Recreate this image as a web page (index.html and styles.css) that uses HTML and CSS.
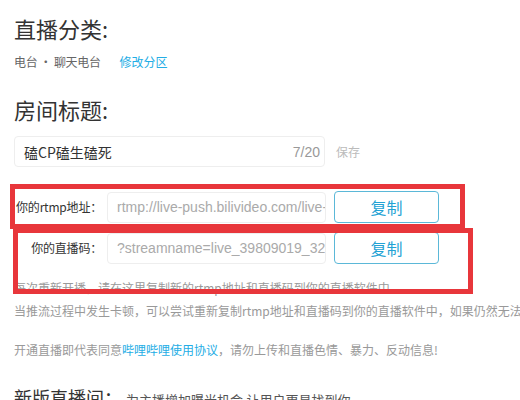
FILE: index.html
```html
<!DOCTYPE html>
<html lang="zh-CN">
<head>
    <meta charset="UTF-8">
    <title>直播间设置</title>
    <link rel="stylesheet" href="styles.css">
</head>
<body>
    <div class="page">
        <h2 class="section-title">直播分类:</h2>
        <div class="category">
            <span class="category-name">电台 · 聊天电台</span>
            <a class="link">修改分区</a>
        </div>

        <h2 class="section-title room">房间标题:</h2>
        <div class="title-row">
            <div class="title-input">
                <span class="title-text">磕CP磕生磕死</span>
                <span class="counter">7/20</span>
            </div>
            <span class="save">保存</span>
        </div>

        <div class="stream-row first">
            <span class="label">你的rtmp地址：</span>
            <div class="field">rtmp://live-push.bilivideo.com/live-bvc/</div>
            <button class="copy">复制</button>
        </div>
        <div class="stream-row">
            <span class="label">你的直播码：</span>
            <div class="field">?streamname=live_39809019_3264150&amp;key=</div>
            <button class="copy">复制</button>
        </div>

        <div class="help">
            <p>每次重新开播，请在这里复制新的rtmp地址和直播码到你的直播软件中</p>
            <p>当推流过程中发生卡顿，可以尝试重新复制rtmp地址和直播码到你的直播软件中，如果仍然无法解决请联系客服</p>
        </div>
        <p class="agree">开通直播即代表同意<a class="link">哔哩哔哩使用协议</a>，请勿上传和直播色情、暴力、反动信息!</p>

        <div class="new-room">
            <h2 class="section-title">新版直播间：</h2>
            <span class="new-desc">为主播增加曝光机会,让用户更易找到你</span>
        </div>

        <div class="mark mark-rtmp"></div>
        <div class="mark mark-code"></div>
    </div>
</body>
</html>
```

FILE: styles.css
```css
* {
    margin: 0;
    padding: 0;
    box-sizing: border-box;
}

body {
    background: #fff;
    font-family: "Noto Sans CJK SC", "Noto Sans", sans-serif;
    color: #333;
    overflow: hidden;
}

.page {
    position: relative;
    padding: 13px 14px 0;
}

.section-title {
    font-size: 22px;
    font-weight: normal;
    line-height: 30px;
    color: #333;
}

.section-title.room {
    margin-top: 23px;
}

.category {
    margin-top: 10px;
    font-size: 12px;
    line-height: 18px;
    white-space: nowrap;
}

.category-name {
    color: #666;
    letter-spacing: -0.3px;
}

.link {
    color: #23ade5;
    cursor: pointer;
}

.category .link {
    margin-left: 16px;
}

.title-row {
    display: flex;
    align-items: center;
    margin-top: 12px;
}

.title-input {
    display: flex;
    flex: 0 0 311px;
    align-items: center;
    justify-content: space-between;
    height: 31px;
    padding: 0 4px 0 9px;
    border: 1px solid #eee;
    border-radius: 4px;
}

.title-text {
    font-size: 14px;
    color: #333;
}

.counter {
    font-family: "Liberation Sans", sans-serif;
    font-size: 14px;
    color: #999;
}

.save {
    margin-left: 11px;
    font-size: 12px;
    color: #bbb;
}

.stream-row {
    display: flex;
    align-items: center;
    margin-top: 9px;
}

.stream-row.first {
    margin-top: 24px;
}

.label {
    width: 88px;
    min-width: 0;
    flex-shrink: 0;
    text-align: right;
    font-size: 12px;
    line-height: 18px;
    letter-spacing: -0.2px;
    color: #333;
    white-space: nowrap;
}

.field {
    flex: 0 0 219px;
    height: 31px;
    margin-left: 5px;
    padding: 0 3px 0 9px;
    border: 1px solid #eee;
    border-radius: 4px;
    font-family: "Liberation Sans", sans-serif;
    font-size: 14px;
    line-height: 29px;
    color: #aaa;
    white-space: nowrap;
    overflow: hidden;
}

.copy {
    flex: 0 0 105px;
    height: 32px;
    margin-left: 8px;
    background: #fff;
    border: 1px solid #5bb8d8;
    border-radius: 4px;
    font-family: "Noto Sans CJK SC", sans-serif;
    font-size: 16px;
    color: #23a2d4;
    cursor: pointer;
}

.help {
    margin-top: 12px;
    font-size: 12px;
    line-height: 23px;
    color: #999;
    white-space: nowrap;
}

.agree {
    margin-top: 16px;
    font-size: 12px;
    line-height: 23px;
    color: #999;
    white-space: nowrap;
}

.new-room {
    display: flex;
    align-items: baseline;
    margin-top: 21px;
    white-space: nowrap;
}

.new-room .section-title {
    font-size: 18px;
}

.new-desc {
    margin-left: 4px;
    font-size: 13px;
    color: #555;
}

.mark {
    position: absolute;
    border: 5px solid #e8363b;
}

.mark-rtmp {
    left: 10px;
    top: 184px;
    width: 455px;
    height: 45px;
}

.mark-code {
    left: 13px;
    top: 228px;
    width: 460px;
    height: 66px;
}
```
